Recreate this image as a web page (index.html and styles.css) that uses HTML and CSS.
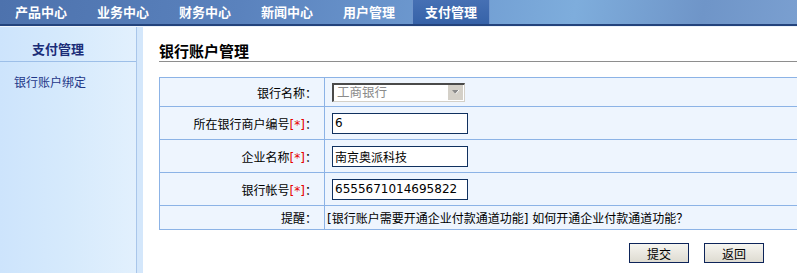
FILE: index.html
```html
<!DOCTYPE html>
<html lang="zh-CN">

<head>
    <meta charset="UTF-8">
    <meta name="viewport" content="width=device-width, initial-scale=1.0">
    <title>银行账户管理</title>
    <link rel="stylesheet" href="styles.css">
</head>

<body>

    <div class="topnav">
        <a class="nav-item">产品中心</a>
        <a class="nav-item">业务中心</a>
        <a class="nav-item">财务中心</a>
        <a class="nav-item">新闻中心</a>
        <a class="nav-item">用户管理</a>
        <a class="nav-item active">支付管理</a>
    </div>

    <div class="layout">
        <div class="sidebar">
            <div class="side-title">支付管理</div>
            <a class="side-link">银行账户绑定</a>
        </div>
        <div class="sidebar-edge"></div>

        <div class="main">
            <h2 class="page-title">银行账户管理</h2>

            <table class="form-table">
                <tr class="row-first">
                    <td class="label">银行名称：</td>
                    <td class="field">
                        <div class="fake-select">
                            <span class="fake-select-text">工商银行</span>
                            <span class="fake-select-btn">
                                <svg width="9" height="6" viewBox="0 0 9 6">
                                    <path d="M1 1 L8 1 L4.5 5 Z" fill="#8a8a8a" />
                                    <path d="M4.5 5 L8 1" stroke="#fff" stroke-width="1" />
                                </svg>
                            </span>
                        </div>
                    </td>
                </tr>
                <tr>
                    <td class="label">所在银行商户编号<span class="req">[*]</span>：</td>
                    <td class="field"><input class="text-input" type="text" value="6"></td>
                </tr>
                <tr>
                    <td class="label">企业名称<span class="req">[*]</span>：</td>
                    <td class="field"><input class="text-input" type="text" value="南京奥派科技"></td>
                </tr>
                <tr>
                    <td class="label">银行帐号<span class="req">[*]</span>：</td>
                    <td class="field"><input class="text-input" type="text" value="6555671014695822"></td>
                </tr>
                <tr class="row-hint">
                    <td class="label">提醒：</td>
                    <td class="hint">[银行账户需要开通企业付款通道功能] 如何开通企业付款通道功能？</td>
                </tr>
            </table>

            <div class="actions">
                <button class="btn">提交</button>
                <button class="btn">返回</button>
            </div>
        </div>
    </div>

</body>

</html>
```

FILE: styles.css
```css
html,
body {
    margin: 0;
    padding: 0;
    height: 100%;
    overflow: hidden;
}

body {
    font-family: "DejaVu Sans", "Noto Sans CJK SC", sans-serif;
    font-size: 12px;
    color: #000;
    background: #fff;
}

.topnav {
    display: flex;
    gap: 4px;
    height: 24px;
    padding-left: 2px;
    border-bottom: 2px solid #23437c;
    background: linear-gradient(100deg, #4d72ad 0%, #5a82bd 30%, #6e9ad0 55%, #7eaddc 72%, #6f95c8 88%, #7a9fd0 100%);
}

.nav-item {
    padding: 0 13px;
    line-height: 24px;
    font-family: "Noto Sans CJK SC", sans-serif;
    font-size: 13px;
    font-weight: bold;
    color: #fff;
}

.nav-item.active {
    background: linear-gradient(to bottom, #4670b4, #3662a8);
    box-shadow: inset 1px 0 0 #6f95cc, inset -1px 0 0 #6f95cc;
}

.layout {
    display: flex;
    height: calc(100% - 26px);
    border-top: 1px solid #eef4fb;
}

.sidebar {
    width: 136px;
    flex-shrink: 0;
    border-right: 1px solid #a9c6ea;
    background: linear-gradient(to right, #cde4fc, #d6eafc 50%, #e2f0fd);
}

.sidebar-edge {
    width: 6px;
    flex-shrink: 0;
    background: #d4e7fb;
}

.side-title {
    height: 24px;
    padding: 10px 0 0 32px;
    line-height: 24px;
    border-bottom: 1px solid #9dbfe8;
    font-family: "Noto Sans CJK SC", sans-serif;
    font-size: 13px;
    font-weight: bold;
    color: #1b2d78;
}

.side-link {
    display: block;
    padding: 13px 0 0 14px;
    line-height: 14px;
    color: #1e3788;
    font-family: "Noto Sans CJK SC", sans-serif;
}

.main {
    flex: 1;
    padding-left: 16px;
}

.page-title {
    margin: 0;
    padding-top: 13px;
    height: 21px;
    line-height: 21px;
    border-bottom: 1px solid #8e8e8e;
    font-family: "Noto Sans CJK SC", sans-serif;
    font-size: 15px;
    font-weight: bold;
    color: #000;
}

.form-table {
    width: 100%;
    margin-top: 15px;
    border-collapse: collapse;
    background: #eef5fe;
}

.form-table td {
    border: 1px solid #8cb3e6;
    border-right: none;
    padding: 0;
    height: 33px;
    box-sizing: border-box;
}

.form-table .row-first td {
    height: 29px;
}

.form-table .row-hint td {
    height: 24px;
}

.label {
    width: 165px;
    padding-right: 7px !important;
    text-align: right;
    white-space: nowrap;
    box-sizing: border-box;
}

.req {
    color: #e60000;
}

.field {
    padding-left: 7px !important;
}

.hint {
    padding-left: 2px !important;
}

.text-input {
    display: block;
    width: 136px;
    height: 21px;
    margin: 0;
    padding: 0 2px;
    box-sizing: border-box;
    border: 1px solid #10315f;
    border-radius: 0;
    outline: none;
    background: #fff;
    font-family: "DejaVu Sans", "Noto Sans CJK SC", sans-serif;
    font-size: 12px;
    color: #000;
}

.fake-select {
    display: flex;
    width: 133px;
    height: 19px;
    box-sizing: border-box;
    border-top: 2px solid #4a4a4a;
    border-left: 2px solid #4a4a4a;
    border-right: 1px solid #d4d0c8;
    border-bottom: 1px solid #d4d0c8;
    background: #fff;
}

.fake-select-text {
    flex: 1;
    padding-left: 3px;
    line-height: 16px;
    color: #8a8a8a;
    font-size: 12.5px;
}

.fake-select-btn {
    display: flex;
    align-items: center;
    justify-content: center;
    width: 15px;
    height: 15px;
    margin: 0 1px 1px 0;
    background: #d4d0c8;
}

.actions {
    display: flex;
    justify-content: flex-end;
    gap: 15px;
    margin-top: 13px;
    padding-right: 33px;
}

.btn {
    width: 60px;
    height: 20px;
    padding: 0;
    border: 1px solid #0d2459;
    border-radius: 0;
    background: linear-gradient(to bottom, #f6f5f0, #dedbd1);
    font-family: "Noto Sans CJK SC", sans-serif;
    font-size: 12px;
    color: #000;
}
```
